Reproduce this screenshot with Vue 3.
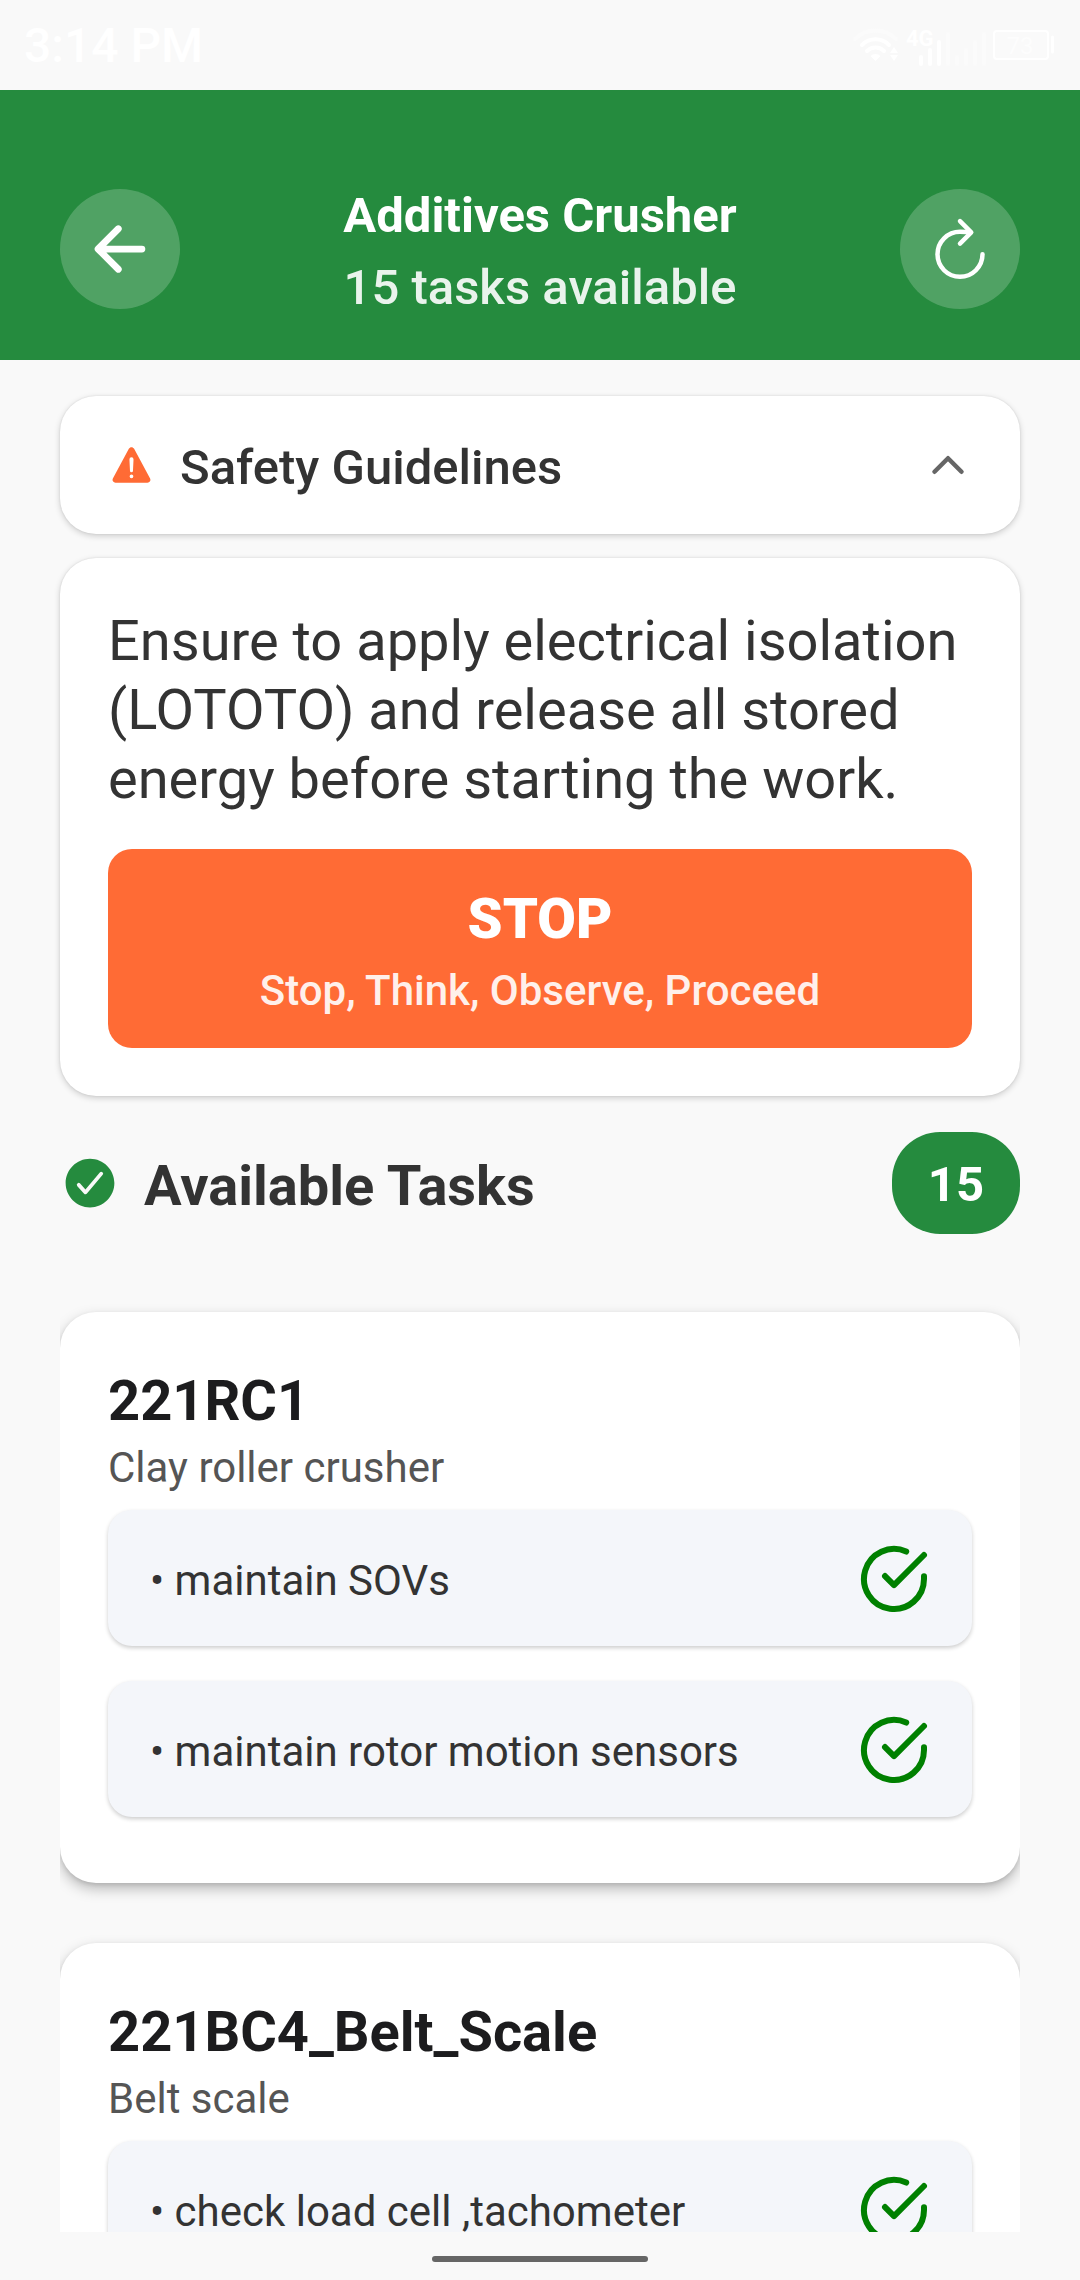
<script setup>
import { ref } from 'vue'

const guidelinesOpen = ref(true)
const taskCount = 15

const equipment = [
  {
    tag: '221RC1',
    name: 'Clay roller crusher',
    tasks: ['maintain SOVs', 'maintain rotor motion sensors'],
  },
  {
    tag: '221BC4_Belt_Scale',
    name: 'Belt scale',
    tasks: ['check load cell ,tachometer'],
  },
]
</script>

<template>
  <div class="screen">
    <div class="status-bar">
      <span class="clock">3:14 PM</span>
      <svg class="status-icons" viewBox="850 20 210 50" fill="none" aria-hidden="true">
        <path d="M855 38a29 29 0 0 1 41 0" stroke="#fbfbfb" stroke-width="4" stroke-linecap="round" />
        <path d="M862 44a19 19 0 0 1 27 0M867 50a12 12 0 0 1 17 0" stroke="#fff" stroke-width="4" stroke-linecap="round" />
        <path d="M875.500 60l-5-5a7 7 0 0 1 10 0z" fill="#fff" />
        <path d="M890 52l4-6 4 6zM890 54l4 6 4-6z" fill="#fff" />
        <text class="network" x="906" y="45" fill="#fff">4G</text>
        <path d="M921 56v7M930 49v14M939 41v22" stroke="#fff" stroke-width="4" stroke-linecap="round" />
        <path d="M948 33v30M957 56v7M966 49v14M975 41v22M984 33v30" stroke="#fbfbfb" stroke-width="4" stroke-linecap="round" />
        <rect x="994" y="30" width="54" height="28" rx="3" fill="#fafafa" stroke="#fff" stroke-width="2" />
        <path d="M1052.500 36v15" stroke="#fff" stroke-width="3" stroke-linecap="round" />
        <text class="charge" x="1020" y="53" fill="#fdfdfd" text-anchor="middle">73</text>
      </svg>
    </div>

    <header class="app-header">
      <button class="round-button" type="button" aria-label="Back">
        <svg viewBox="0 0 512 512" aria-hidden="true">
          <path d="M244 400L100 256l144-144M120 256h292" stroke-width="48" />
        </svg>
      </button>
      <div class="heading">
        <h1>Additives Crusher</h1>
        <p>{{ taskCount }} tasks available</p>
      </div>
      <button class="round-button" type="button" aria-label="Refresh">
        <svg viewBox="0 0 512 512" aria-hidden="true">
          <path d="M320 146s24.360-12-64-12a160 160 0 1 0 160 160" stroke-width="32" />
          <path d="M256 58l80 80-80 80" stroke-width="32" />
        </svg>
      </button>
    </header>

    <main class="content">
      <button
        class="card safety-toggle"
        type="button"
        :aria-expanded="guidelinesOpen"
        @click="guidelinesOpen = !guidelinesOpen"
      >
        <svg class="icon" viewBox="0 0 512 512" aria-hidden="true">
          <path
            fill="#ff6b35"
            d="M449.070 399.080L278.640 82.580c-12.080-22.440-44.260-22.440-56.350 0L51.870 399.080A32 32 0 0 0 80 446.250h340.890a32 32 0 0 0 28.180-47.170zm-198.600-1.830a20 20 0 1 1 20-20 20 20 0 0 1-20 20zm21.720-201.150l-5.740 122a16 16 0 0 1-32 0l-5.740-121.950a21.730 21.730 0 0 1 21.500-22.690h.210a21.740 21.740 0 0 1 21.730 22.700z"
          />
        </svg>
        <span class="label">Safety Guidelines</span>
        <svg class="icon chevron" :class="{ closed: !guidelinesOpen }" viewBox="0 0 512 512" aria-hidden="true">
          <path d="M112 328l144-144 144 144" />
        </svg>
      </button>

      <section v-if="guidelinesOpen" class="card guidelines">
        <p class="advice">
          Ensure to apply electrical isolation (LOTOTO) and release all stored energy before starting the work.
        </p>
        <div class="stop">
          <strong>STOP</strong>
          <span>Stop, Think, Observe, Proceed</span>
        </div>
      </section>

      <div class="section-title">
        <svg class="check-badge" viewBox="0 0 512 512" aria-hidden="true">
          <path
            fill="#258b3e"
            d="M256 48C141.310 48 48 141.310 48 256s93.310 208 208 208 208-93.310 208-208S370.690 48 256 48zm108.250 138.290l-134.400 160a16 16 0 0 1-12 5.710h-.270a16 16 0 0 1-11.890-5.300l-57.600-64a16 16 0 1 1 23.780-21.400l45.290 50.320 122.590-145.910a16 16 0 0 1 24.500 20.580z"
          />
        </svg>
        <h2>Available Tasks</h2>
        <span class="count">{{ taskCount }}</span>
      </div>

      <div class="equipment-list">
        <article v-for="item in equipment" :key="item.tag" class="equipment">
          <h3>{{ item.tag }}</h3>
          <p>{{ item.name }}</p>
          <ul>
            <li v-for="task in item.tasks" :key="task">
              <span class="task-name">• {{ task }}</span>
              <button class="complete" type="button" :aria-label="'Complete: ' + task">
                <svg viewBox="0 0 24 24" aria-hidden="true">
                  <path d="M22 11.080V12a10 10 0 1 1-5.930-9.140" />
                  <path d="M22 4L12 14.010l-3-3" />
                </svg>
              </button>
            </li>
          </ul>
        </article>
      </div>
    </main>

    <div class="home-bar"><span></span></div>
  </div>
</template>

<style>
body {
  margin: 0;
  background: #f9f9f9;
}
</style>

<style scoped>
.screen {
  display: flex;
  flex-direction: column;
  height: 100vh;
  background: #f9f9f9;
  color: #333;
  font-family: Roboto, "Noto Sans", sans-serif;
}

h1,
h2,
h3,
p,
ul {
  margin: 0;
  padding: 0;
}

button {
  border: 0;
  padding: 0;
  font: inherit;
  color: inherit;
  cursor: pointer;
}

svg {
  display: block;
  flex: none;
}

.status-bar {
  display: flex;
  flex: none;
  align-items: center;
  justify-content: space-between;
  box-sizing: border-box;
  height: 90px;
  padding: 2px 20px 0 24px;
}

.clock {
  color: #fff;
  font-size: 48px;
  font-weight: 500;
  line-height: 60px;
}

.status-icons {
  width: 210px;
  height: 50px;
}

.network {
  font-size: 22px;
  font-weight: 700;
}

.charge {
  font-size: 24px;
}

.app-header {
  display: flex;
  flex: none;
  align-items: center;
  justify-content: space-between;
  padding: 96px 60px 48px;
  background: #258b3e;
  color: #fff;
}

.round-button {
  display: grid;
  place-items: center;
  width: 120px;
  height: 120px;
  border-radius: 50%;
  background: rgba(255, 255, 255, 0.2);
}

.round-button svg {
  width: 72px;
  height: 72px;
  fill: none;
  stroke: #fff;
  stroke-linecap: round;
  stroke-linejoin: round;
}

.heading {
  text-align: center;
}

.heading h1 {
  font-size: 49px;
  font-weight: 700;
  line-height: 60px;
}

.heading p {
  margin-top: 18px;
  font-size: 49px;
  font-weight: 500;
  line-height: 48px;
  opacity: 0.9;
}

.content {
  display: flex;
  flex: 1;
  flex-direction: column;
  min-height: 0;
  padding: 36px 60px 0;
}

.card {
  flex: none;
  border-radius: 36px;
  background: #fff;
  box-shadow: 0 2px 6px rgba(0, 0, 0, 0.18), 0 0 2px rgba(0, 0, 0, 0.1);
}

.safety-toggle {
  display: flex;
  align-items: center;
  gap: 24px;
  padding: 42px 48px;
  text-align: left;
}

.icon {
  width: 48px;
  height: 48px;
}

.label {
  flex: 1;
  padding-top: 6px;
  font-size: 49px;
  font-weight: 500;
  line-height: 48px;
}

.chevron {
  fill: none;
  stroke: #666;
  stroke-width: 48;
  stroke-linecap: round;
  stroke-linejoin: round;
}

.chevron.closed {
  transform: rotate(180deg);
}

.guidelines {
  margin-top: 24px;
  padding: 49px 48px 48px;
}

.advice {
  font-size: 56px;
  line-height: 69px;
}

.stop {
  display: flex;
  flex-direction: column;
  align-items: center;
  gap: 16px;
  margin-top: 35px;
  padding: 37px 36px 35px;
  border-radius: 24px;
  background: #ff6b35;
  color: #fff;
}

.stop strong {
  font-size: 56px;
  font-weight: 900;
  line-height: 67px;
}

.stop span {
  font-size: 42px;
  font-weight: 500;
  line-height: 44px;
  opacity: 0.9;
}

.section-title {
  display: flex;
  flex: none;
  align-items: center;
  gap: 24px;
  margin: 36px 0 48px;
}

.check-badge {
  width: 60px;
  height: 60px;
}

.section-title h2 {
  flex: 1;
  padding-top: 6px;
  font-size: 56px;
  font-weight: 700;
  line-height: 66px;
}

.count {
  box-sizing: border-box;
  height: 102px;
  padding: 4px 36px 0;
  border-radius: 48px;
  background: #258b3e;
  color: #fff;
  font-size: 49px;
  font-weight: 700;
  line-height: 98px;
}

.equipment-list {
  display: flex;
  flex: 1;
  flex-direction: column;
  gap: 60px;
  min-height: 0;
  padding-top: 30px;
  overflow-y: auto;
  scrollbar-width: none;
}

.equipment {
  flex: none;
  padding: 48px 48px 66px;
  border-radius: 36px;
  background: #fff;
  box-shadow: 0 6px 14px rgba(0, 0, 0, 0.25), 0 2px 4px rgba(0, 0, 0, 0.1);
}

.equipment h3 {
  color: #1c1c1e;
  font-size: 56px;
  font-weight: 700;
  line-height: 82px;
}

.equipment p {
  color: #555;
  font-size: 42px;
  line-height: 52px;
}

.equipment ul {
  display: flex;
  flex-direction: column;
  gap: 35px;
  margin-top: 16px;
  list-style: none;
}

.equipment li {
  display: flex;
  align-items: center;
  justify-content: space-between;
  padding: 33px 42px 31px;
  border-radius: 24px;
  background: #f4f6fa;
  box-shadow: 0 2px 4px rgba(0, 0, 0, 0.2);
}

.task-name {
  padding-top: 4px;
  font-size: 42px;
  line-height: 54px;
}

.complete {
  background: none;
}

.complete svg {
  width: 72px;
  height: 72px;
  fill: none;
  stroke: #008000;
  stroke-width: 2;
  stroke-linecap: round;
  stroke-linejoin: round;
}

.home-bar {
  display: flex;
  flex: none;
  align-items: center;
  justify-content: center;
  height: 48px;
  padding-top: 6px;
  box-sizing: border-box;
}

.home-bar span {
  width: 216px;
  height: 6px;
  border-radius: 3px;
  background: #666;
}
</style>
